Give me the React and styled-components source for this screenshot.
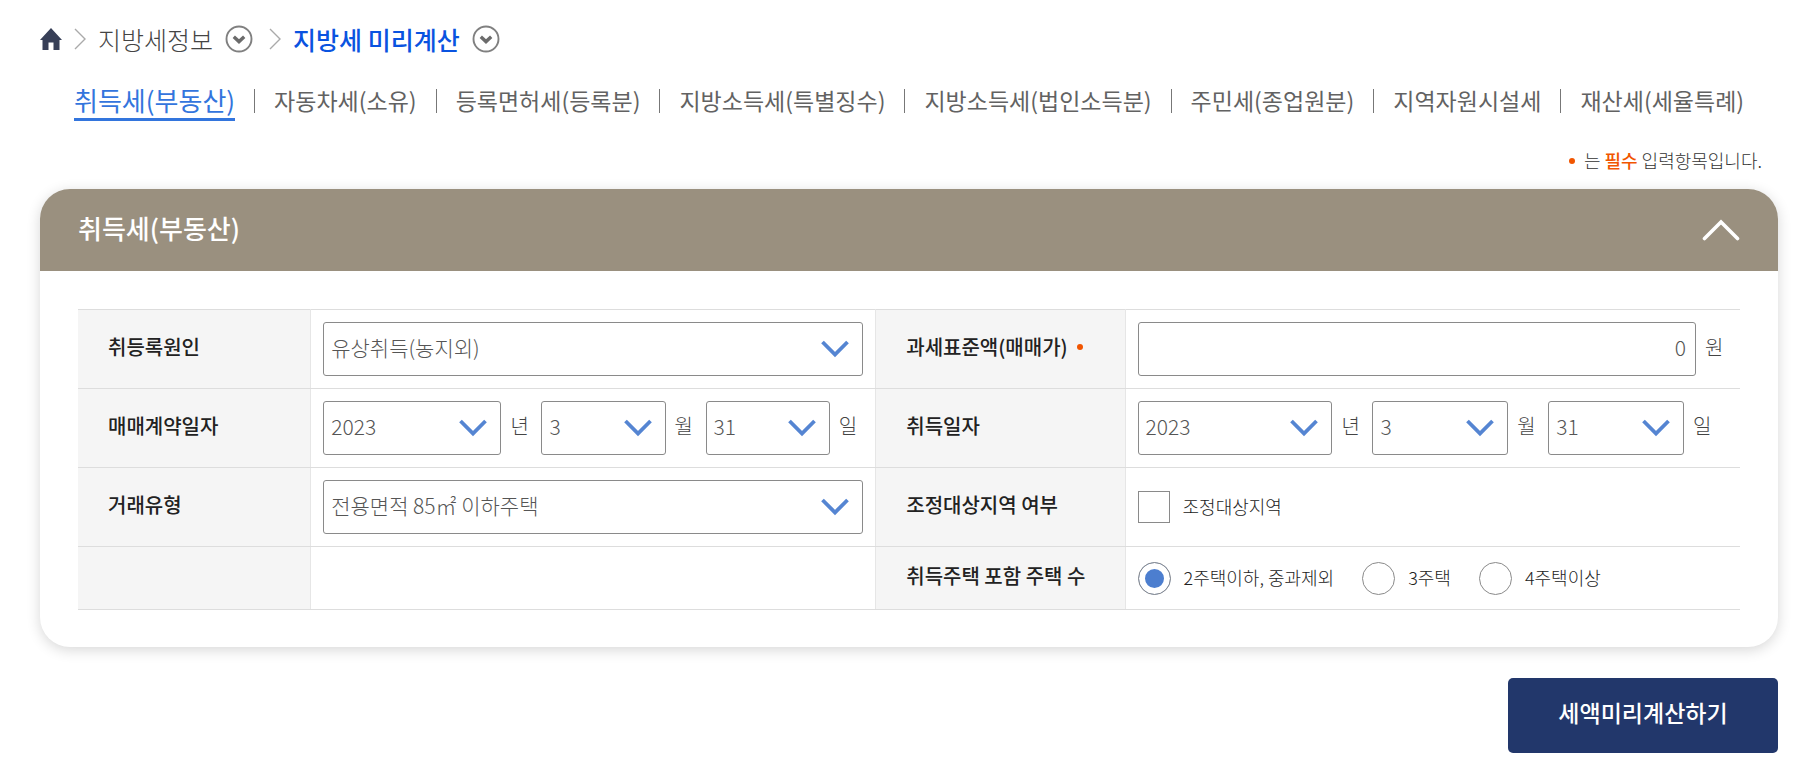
import React, { useState } from "react";
import styled, { createGlobalStyle } from "styled-components";

const tabs = [
	"취득세(부동산)",
	"자동차세(소유)",
	"등록면허세(등록분)",
	"지방소득세(특별징수)",
	"지방소득세(법인소득분)",
	"주민세(종업원분)",
	"지역자원시설세",
	"재산세(세율특례)",
];

const houseOptions = ["2주택이하, 중과제외", "3주택", "4주택이상"];

function range(from, to) {
	const list = [];
	for (let i = from; i <= to; i++) list.push(String(i));
	return list;
}

function HomeIcon() {
	return (
		<svg width="22" height="22" viewBox="0 0 22 22" aria-hidden="true">
			<path
				d="M11 0 L22 12 H19.5 V22 H13.5 V14.5 H8.5 V22 H2.5 V12 H0 Z"
				fill="#373f57"
			/>
		</svg>
	);
}

function Arrow() {
	return (
		<svg width="12" height="22" viewBox="0 0 12 22" fill="none" aria-hidden="true">
			<path d="M1 1 L11 11 L1 21" stroke="#aaa" strokeWidth="1.4" />
		</svg>
	);
}

function CircleDown() {
	return (
		<svg width="28" height="28" viewBox="0 0 28 28" fill="none" aria-hidden="true">
			<circle cx="14" cy="14" r="12.5" stroke="#808080" strokeWidth="1.9" />
			<path d="M8.8 11.8 L14 16.6 L19.2 11.8" stroke="#6b6b6b" strokeWidth="3.4" />
		</svg>
	);
}

function SelectBox({ id, label, options, value, size }) {
	const [current, setCurrent] = useState(value);
	return (
		<SelectWrap $size={size}>
			<Select
				id={id}
				aria-label={label}
				value={current}
				onChange={(e) => setCurrent(e.target.value)}
			>
				{options.map((item) => (
					<option key={item}>{item}</option>
				))}
			</Select>
			<SelectArrow width="28" height="18" viewBox="0 0 28 18" fill="none">
				<path d="M1.5 2 L14 14.5 L26.5 2" stroke="#5585d2" strokeWidth="3.8" />
			</SelectArrow>
		</SelectWrap>
	);
}

function DateFields({ id, label }) {
	return (
		<Fields>
			<SelectBox
				id={id}
				label={label + " 년"}
				options={range(2013, 2023)}
				value="2023"
				size="33%"
			/>
			<Unit>년</Unit>
			<SelectBox label={label + " 월"} options={range(1, 12)} value="3" size="23%" />
			<Unit>월</Unit>
			<SelectBox label={label + " 일"} options={range(1, 31)} value="31" size="23%" />
			<Unit>일</Unit>
		</Fields>
	);
}

function App() {
	const [open, setOpen] = useState(true);
	const [amount, setAmount] = useState("0");
	const [houses, setHouses] = useState(houseOptions[0]);

	return (
		<Page>
			<GlobalStyle />
			<Breadcrumb>
				<CrumbLink href="#home" aria-label="홈">
					<HomeIcon />
				</CrumbLink>
				<Arrow />
				<CrumbLink href="#info">지방세정보</CrumbLink>
				<RoundButton type="button" aria-label="지방세정보 메뉴">
					<CircleDown />
				</RoundButton>
				<Arrow />
				<CrumbLink href="#preview" $current>
					지방세 미리계산
				</CrumbLink>
				<RoundButton type="button" aria-label="지방세 미리계산 메뉴">
					<CircleDown />
				</RoundButton>
			</Breadcrumb>

			<TabList>
				{tabs.map((tab, i) => (
					<TabItem key={tab}>
						<TabLink href={"#tab" + i} $active={i === 0}>
							{tab}
						</TabLink>
					</TabItem>
				))}
			</TabList>

			<Notice>
				<Dot />
				<span>
					는 <Strong>필수</Strong> 입력항목입니다.
				</span>
			</Notice>

			<Card>
				<CardHeader>
					<CardTitle>취득세(부동산)</CardTitle>
					<Toggle type="button" aria-label="접기" onClick={() => setOpen(!open)}>
						<svg width="38" height="22" viewBox="0 0 38 22" fill="none">
							<path
								d="M2.5 19.5 L19 3 L35.5 19.5"
								stroke="#fff"
								strokeWidth="3.6"
								strokeLinecap="round"
							/>
						</svg>
					</Toggle>
				</CardHeader>
				{open && (
					<CardBody>
						<Table>
							<colgroup>
								<Col $size="14%" />
								<Col $size="34%" />
								<Col $size="15%" />
								<Col $size="37%" />
							</colgroup>
							<tbody>
								<tr>
									<Th scope="row">
										<label htmlFor="reason">취등록원인</label>
									</Th>
									<Td>
										<SelectBox
											id="reason"
											options={["유상취득(농지외)"]}
											value="유상취득(농지외)"
											size="100%"
										/>
									</Td>
									<Th scope="row">
										<Required>
											<label htmlFor="amount">과세표준액(매매가)</label>
											<Dot />
										</Required>
									</Th>
									<Td>
										<Fields>
											<AmountInput
												id="amount"
												type="text"
												value={amount}
												onChange={(e) => setAmount(e.target.value)}
											/>
											<Unit>원</Unit>
										</Fields>
									</Td>
								</tr>
								<tr>
									<Th scope="row">
										<label htmlFor="contract">매매계약일자</label>
									</Th>
									<Td>
										<DateFields id="contract" label="매매계약일자" />
									</Td>
									<Th scope="row">
										<label htmlFor="acquired">취득일자</label>
									</Th>
									<Td>
										<DateFields id="acquired" label="취득일자" />
									</Td>
								</tr>
								<tr>
									<Th scope="row">
										<label htmlFor="kind">거래유형</label>
									</Th>
									<Td>
										<SelectBox
											id="kind"
											options={["전용면적 85㎡ 이하주택"]}
											value="전용면적 85㎡ 이하주택"
											size="100%"
										/>
									</Td>
									<Th scope="row">조정대상지역 여부</Th>
									<Td>
										<Choice>
											<Checkbox type="checkbox" />
											<ChoiceText>조정대상지역</ChoiceText>
										</Choice>
									</Td>
								</tr>
								<tr>
									<Th scope="row" />
									<Td $short />
									<Th scope="row">취득주택 포함 주택 수</Th>
									<Td $short>
										<Choices>
											{houseOptions.map((item) => (
												<Choice key={item}>
													<Radio
														type="radio"
														name="houses"
														checked={houses === item}
														onChange={() => setHouses(item)}
													/>
													<ChoiceText>{item}</ChoiceText>
												</Choice>
											))}
										</Choices>
									</Td>
								</tr>
							</tbody>
						</Table>
					</CardBody>
				)}
			</Card>

			<Actions>
				<SubmitButton type="button">세액미리계산하기</SubmitButton>
			</Actions>
		</Page>
	);
}

const GlobalStyle = createGlobalStyle`
	* {
		box-sizing: border-box;
	}
	body {
		margin: 0;
		background: #fff;
		font-family: "Noto Sans CJK KR", "Noto Sans", sans-serif;
	}
	button, input, select {
		font-family: inherit;
	}
`;
const Page = styled.div`
	padding: 19px 25px 24px 40px;
`;
const Breadcrumb = styled.nav`
	display: flex;
	align-items: center;
	gap: 12px;
	height: 40px;
`;
const CrumbLink = styled.a`
	display: flex;
	font-size: 25px;
	line-height: 36px;
	font-weight: ${(props) => (props.$current ? 500 : 300)};
	color: ${(props) => (props.$current ? "#0a53e0" : "#444")};
	text-decoration: none;
`;
const RoundButton = styled.button`
	display: flex;
	margin-right: 4px;
	padding: 0;
	border: 0;
	background: none;
	cursor: pointer;
`;
const TabList = styled.ul`
	display: flex;
	margin: 20px 0 0;
	padding: 0 0 0 34px;
	list-style: none;
`;
const TabItem = styled.li`
	display: flex;
	align-items: center;
	height: 44px;

	& + &::before {
		content: "";
		width: 1px;
		height: 24px;
		margin: 0 19px;
		background: #777;
	}
`;
const TabLink = styled.a`
	border-bottom: 3px solid ${(props) => (props.$active ? "#3375dd" : "transparent")};
	font-size: ${(props) => (props.$active ? "26px" : "23px")};
	line-height: 36px;
	color: ${(props) => (props.$active ? "#3375dd" : "#626262")};
	text-decoration: none;
	white-space: nowrap;
`;
const Notice = styled.p`
	display: flex;
	justify-content: flex-end;
	align-items: center;
	gap: 9px;
	margin: 24px 16px 15px 0;
	font-size: 18px;
	line-height: 27px;
	font-weight: 300;
	color: #333;
`;
const Strong = styled.strong`
	font-weight: 500;
	color: #f15500;
`;
const Dot = styled.i`
	width: 6px;
	height: 6px;
	border-radius: 50%;
	background: #f15500;
`;
const Card = styled.section`
	border-radius: 30px;
	background: #fff;
	box-shadow: 0 3px 14px rgba(0, 0, 0, 0.16);
	overflow: hidden;
`;
const CardHeader = styled.div`
	display: flex;
	justify-content: space-between;
	align-items: center;
	height: 82px;
	padding: 0 38px;
	background: #9a907f;
`;
const CardTitle = styled.h2`
	margin: 0;
	padding-bottom: 4px;
	font-size: 26px;
	line-height: 38px;
	font-weight: 500;
	color: #fff;
`;
const Toggle = styled.button`
	display: flex;
	padding: 0;
	border: 0;
	background: none;
	cursor: pointer;
`;
const CardBody = styled.div`
	padding: 38px 38px 37px;
`;
const Table = styled.table`
	width: 100%;
	table-layout: fixed;
	border-collapse: collapse;
	border-top: 1px solid #ddd;
`;
const Col = styled.col`
	width: ${(props) => props.$size};
`;
const Th = styled.th`
	padding: 0 0 4px 30px;
	border: 1px solid #e6e6e6;
	border-width: 0 1px 1px;
	border-bottom-color: #ddd;
	background: #f5f5f5;
	font-size: 20px;
	line-height: 30px;
	font-weight: 500;
	color: #222;
	text-align: left;

	&:first-child {
		border-left: 0;
	}
`;
const Td = styled.td`
	height: ${(props) => (props.$short ? "63px" : "79px")};
	padding: 0 12px;
	border-bottom: 1px solid #ddd;
`;
const Required = styled.div`
	display: flex;
	align-items: center;
	gap: 9px;
`;
const Fields = styled.div`
	display: flex;
	align-items: center;
`;
const SelectWrap = styled.div`
	position: relative;
	flex: none;
	width: ${(props) => props.$size};
`;
const Select = styled.select`
	display: block;
	width: 100%;
	height: 54px;
	padding: 0 48px 4px 7px;
	border: 1px solid #8a8a8a;
	border-radius: 3px;
	background: #fff;
	appearance: none;
	font-size: 21px;
	font-weight: 300;
	color: #555;
`;
const SelectArrow = styled.svg`
	position: absolute;
	top: 18px;
	right: 14px;
	pointer-events: none;
`;
const AmountInput = styled.input`
	flex: 1;
	min-width: 0;
	height: 54px;
	padding: 0 9px 4px;
	border: 1px solid #8a8a8a;
	border-radius: 3px;
	font-size: 21px;
	font-weight: 300;
	color: #555;
	text-align: right;
`;
const Unit = styled.span`
	flex: none;
	width: 40px;
	padding: 0 0 4px 9px;
	font-size: 20px;
	line-height: 30px;
	font-weight: 300;
	color: #444;

	&:last-child {
		width: 32px;
	}
`;
const Choices = styled.div`
	display: flex;
	gap: 28px;
`;
const Choice = styled.label`
	display: flex;
	align-items: center;
	gap: 13px;
`;
const ChoiceText = styled.span`
	padding-bottom: 2px;
	font-size: 18px;
	line-height: 27px;
	font-weight: 300;
	color: #222;
	white-space: nowrap;
`;
const Checkbox = styled.input`
	width: 32px;
	height: 32px;
	margin: 0;
	border: 1px solid #8a8a8a;
	background: #fff;
	appearance: none;

	&:checked {
		background: #4c7ecf;
	}
`;
const Radio = styled.input`
	width: 33px;
	height: 33px;
	margin: 0;
	border: 1px solid #8a8a8a;
	border-radius: 50%;
	background: #fff;
	appearance: none;

	&:checked {
		background: #4c7ecf;
		box-shadow: inset 0 0 0 6px #fff;
	}
`;
const Actions = styled.div`
	display: flex;
	justify-content: flex-end;
	margin-top: 31px;
`;
const SubmitButton = styled.button`
	height: 75px;
	min-width: 270px;
	padding: 0 32px 8px;
	border: 0;
	border-radius: 5px;
	background: #22376b;
	font-size: 23px;
	font-weight: 500;
	color: #fff;
	cursor: pointer;
`;
export default App;
